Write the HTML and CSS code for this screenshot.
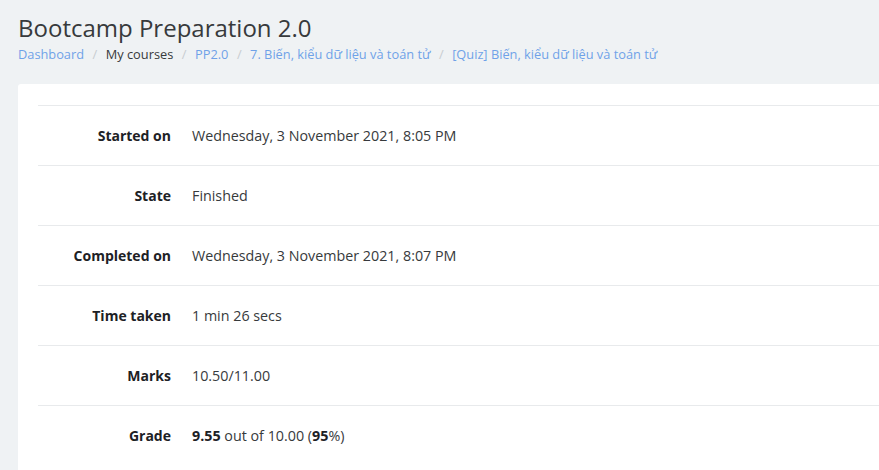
FILE: index.html
```html
<!DOCTYPE html>
<html>
<head>
<meta charset="utf-8">
<link rel="stylesheet" href="styles.css">
</head>
<body>
<div class="page">
  <header class="page-header">
    <h1 class="title">Bootcamp Preparation 2.0</h1>
    <nav class="breadcrumb">
      <a class="crumb link" href="#">Dashboard</a><span class="sep">/</span>
      <span class="crumb">My courses</span><span class="sep">/</span>
      <a class="crumb link" href="#">PP2.0</a><span class="sep">/</span>
      <a class="crumb link" href="#">7. Biến, kiểu dữ liệu và toán tử</a><span class="sep">/</span>
      <a class="crumb link" href="#">[Quiz] Biến, kiểu dữ liệu và toán tử</a>
    </nav>
  </header>
  <main class="card">
    <table class="summary">
      <tr><th>Started on</th><td>Wednesday, 3 November 2021, 8:05 PM</td></tr>
      <tr><th>State</th><td>Finished</td></tr>
      <tr><th>Completed on</th><td>Wednesday, 3 November 2021, 8:07 PM</td></tr>
      <tr><th>Time taken</th><td>1 min 26 secs</td></tr>
      <tr><th>Marks</th><td>10.50/11.00</td></tr>
      <tr><th>Grade</th><td><b>9.55</b> out of 10.00 (<b>95</b>%)</td></tr>
    </table>
  </main>
</div>
</body>
</html>
```
FILE: styles.css
```css
html, body {
  margin: 0;
  padding: 0;
  background: #eff2f4;
  overflow: hidden;
}
body {
  font-family: "Open Sans", "Liberation Sans", sans-serif;
  color: #373a3c;
}
.page {
  padding-left: 18px;
}
.page-header {
  padding-top: 11px;
}
.title {
  margin: 0;
  font-size: 24px;
  font-weight: 400;
  line-height: 34px;
  color: #373a3c;
}
.breadcrumb {
  font-size: 12.8px;
  line-height: 18px;
  margin-top: 0;
  display: flex;
  align-items: center;
}
.crumb {
  color: #373a3c;
  text-decoration: none;
}
.crumb.link {
  color: #6fa2e8;
}
.sep {
  color: #c8cdd1;
  padding: 0 8.5px;
}
.card {
  margin-top: 21px;
  margin-right: -40px;
  background: #fff;
  border-radius: 3px 0 0 0;
  padding: 21px 0 0 20px;
  height: 380px;
}
.summary {
  border-collapse: collapse;
  width: 100%;
  font-size: 14px;
}
.summary tr {
  height: 60px;
  border-top: 1px solid #e8eaec;
}
.summary th {
  width: 133px;
  text-align: right;
  font-weight: 700;
  color: #1d2125;
  padding: 0;
  vertical-align: middle;
}
.summary td {
  padding: 0 0 0 21px;
  font-size: 14.3px;
  color: #373a3c;
  vertical-align: middle;
}
.summary b {
  color: #1d2125;
}
```
